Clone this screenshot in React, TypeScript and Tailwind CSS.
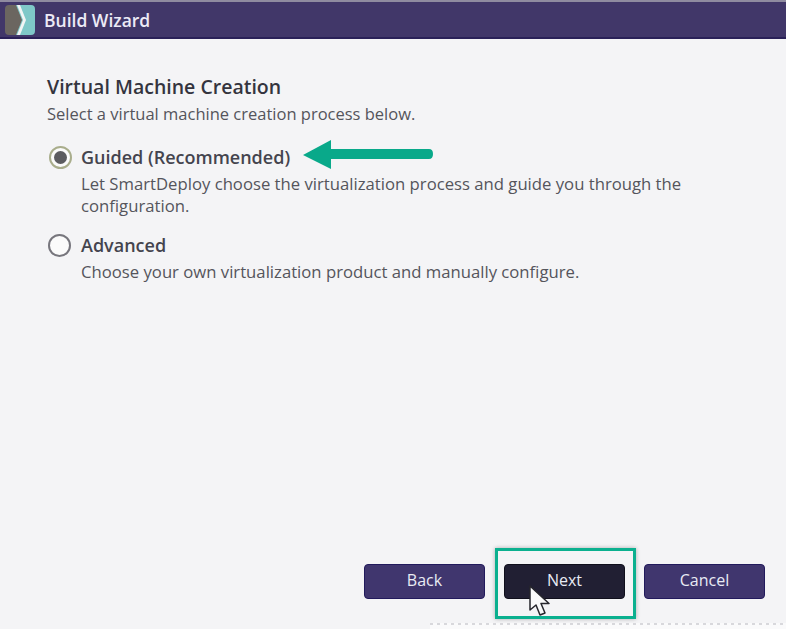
import React from "react";

const FONT = "font-['Open_Sans','Noto_Sans',sans-serif]";

function Logo() {
  return (
    <svg width="30" height="30" viewBox="0 0 30 30" className="shrink-0">
      <path d="M4 0H14L20 15L14 30H4Q0 30 0 26V4Q0 0 4 0Z" fill="#6b6660" />
      <path d="M11 0H26Q30 0 30 4V26Q30 30 26 30H11L17 15Z" fill="#7fc8c8" />
      <path d="M12 0H15L21 15L15 30H12L18 15Z" fill="#f2f4f4" />
    </svg>
  );
}

function Radio({ checked }: { checked?: boolean }) {
  return (
    <div
      className={
        "flex h-[23px] w-[23px] shrink-0 items-center justify-center rounded-full bg-[#fbfbfb] border-2 " +
        (checked ? "border-[#a9ad8c]" : "border-[#77767d]")
      }
    >
      {checked && <div className="h-[13px] w-[13px] rounded-full bg-[#5c5c60]" />}
    </div>
  );
}

function WizardButton({ label, active }: { label: string; active?: boolean }) {
  return (
    <button
      className={
        "h-[35px] w-[121px] rounded-[4px] border pb-[3px] text-[16px] text-[#e9ebf4] " +
        (active ? "bg-[#211f33] border-[#100f1c]" : "bg-[#40366e] border-[#221a5c]")
      }
    >
      {label}
    </button>
  );
}

export default function App() {
  return (
    <div className={`relative flex h-[629px] w-[786px] flex-col overflow-hidden bg-[#f4f4f6] ${FONT}`}>
      {/* title bar */}
      <div className="flex h-[39px] items-center gap-[9px] border-t-2 border-b-2 border-t-[#8f8ba0] border-b-[#2a2158] bg-[#413769] pl-[5px] pt-[1px]">
        <Logo />
        <span className="text-[17.5px] font-semibold text-[#eceaf6]">Build Wizard</span>
      </div>

      {/* body */}
      <div className="flex flex-1 flex-col pl-[47px] pr-[21px] pt-[36px]">
        <h1 className="text-[19.5px] font-semibold leading-[24px] text-[#34343e]">Virtual Machine Creation</h1>
        <p className="mt-[3px] text-[16.5px] leading-[24px] text-[#55555c]">
          Select a virtual machine creation process below.
        </p>

        <div className="ml-[2px] mt-[18px] flex items-center gap-[9px]">
          <Radio checked />
          <span className="text-[18px] font-semibold leading-[26px] text-[#44444e]">Guided (Recommended)</span>
        </div>
        <p className="ml-[34px] mt-[3px] w-[640px] text-[16.7px] leading-[22px] text-[#55555c]">
          Let SmartDeploy choose the virtualization process and guide you through the configuration.
        </p>

        <div className="ml-[1px] mt-[15px] flex items-center gap-[10px]">
          <Radio />
          <span className="text-[18px] font-semibold leading-[26px] text-[#44444e]">Advanced</span>
        </div>
        <p className="ml-[34px] mt-[3px] text-[16.7px] leading-[22px] text-[#55555c]">
          Choose your own virtualization product and manually configure.
        </p>

        <div className="mt-auto mb-[30px] flex justify-end gap-[19px]">
          <WizardButton label="Back" />
          <WizardButton label="Next" active />
          <WizardButton label="Cancel" />
        </div>
      </div>

      {/* faint capture artefact along the bottom edge */}
      <div className="absolute bottom-0 left-[430px] right-0 h-[6px] bg-[#fafafb] bg-[repeating-linear-gradient(90deg,#d8d8dc_0,#d8d8dc_3px,transparent_3px,transparent_7px)] bg-[length:100%_2px] bg-no-repeat" />

      {/* callout arrow */}
      <svg className="absolute left-[298px] top-[136px]" width="140" height="38" viewBox="0 0 140 38">
        <path d="M5 19L33 4V13H131Q135 13 135 18Q135 23 131 23H33V33Z" fill="#09a98a" />
      </svg>

      {/* highlight around Next */}
      <div className="absolute left-[495px] top-[548px] h-[71px] w-[141px] border-[3px] border-[#0bb08f] shadow-[0_0_4px_rgba(0,0,0,0.3)]" />

      {/* mouse pointer */}
      <svg className="absolute left-[528px] top-[585px]" width="22" height="32" viewBox="0 0 22 32">
        <path d="M2 1V25L8 20L12 30L17 28L13 18.5L21 18.5Z" fill="#fafafa" stroke="#26262c" strokeWidth="1.5" strokeLinejoin="round" />
      </svg>
    </div>
  );
}
